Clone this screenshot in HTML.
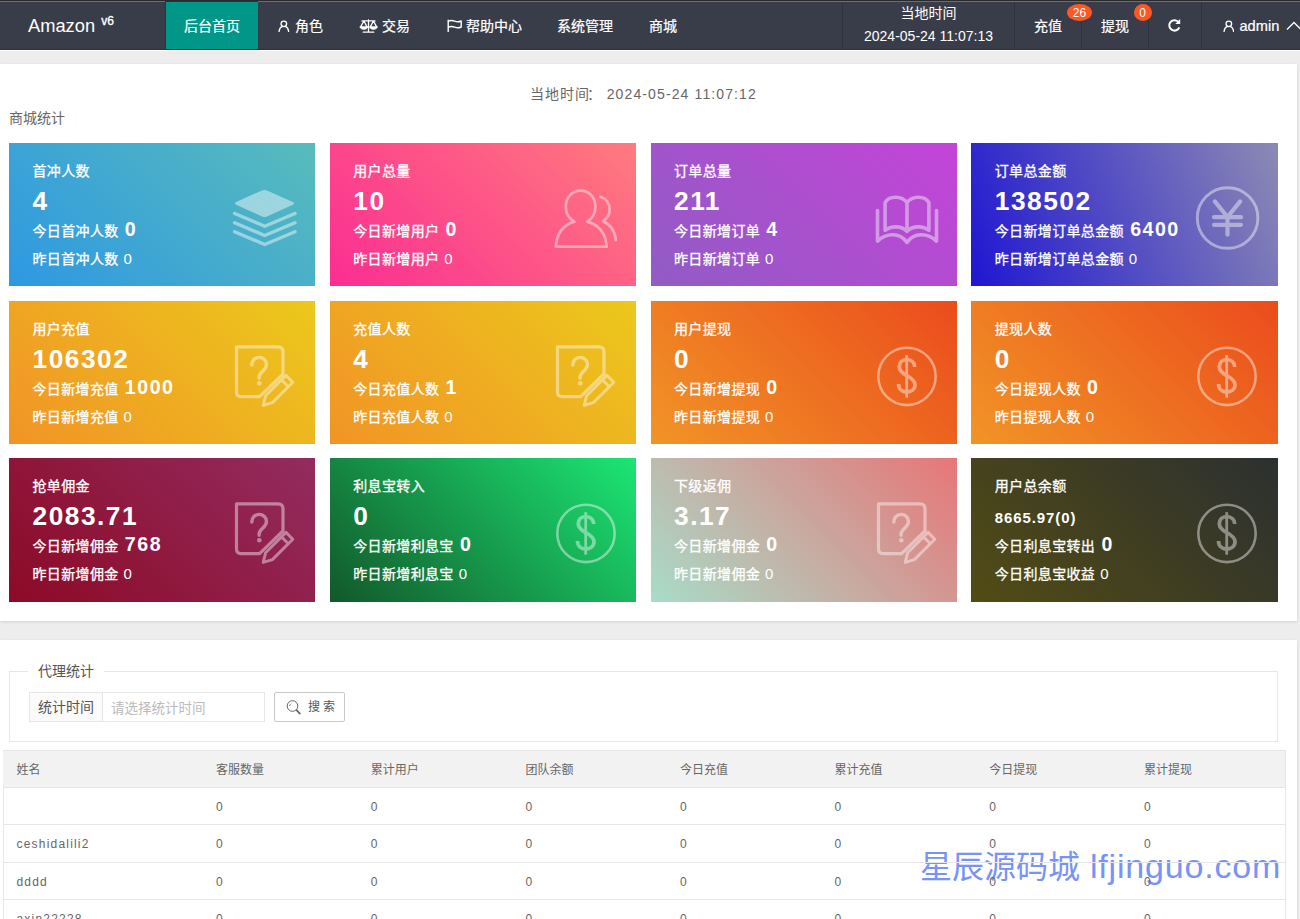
<!DOCTYPE html>
<html lang="zh-CN">
<head>
<meta charset="utf-8">
<title>Amazon v6</title>
<style>
*{box-sizing:border-box;margin:0;padding:0}
html,body{width:1300px;height:919px;overflow:hidden;background:#ededed;font-family:"Liberation Sans","Noto Sans CJK SC",sans-serif;font-size:14px;color:#666}
body{position:relative}
.abs{position:absolute}
/* header */
#hd{position:absolute;left:0;top:0;width:1300px;height:50px;background:#393d49;border-top:2px solid #2a2a2a;border-bottom:1px solid #2e323d;color:#fff}
#hd .nav.on{top:-1px;height:48px;line-height:48px;border-top:1px solid #33302f;border-left:1px solid #3a2c3a;left:165px!important;width:93px!important}
#hd .logo{position:absolute;left:28px;top:12px;font-size:18.3px;line-height:24px;color:#fff;white-space:nowrap}
#hd .logo sup{font-size:12px;font-weight:normal;-webkit-text-stroke:.35px #fff;position:relative;top:0px;left:1px;vertical-align:super;line-height:0}
#hd .nav{position:absolute;top:0;height:47px;line-height:48px;font-size:14px;color:#fff;white-space:nowrap;-webkit-text-stroke:.22px #fff}
#hd .nav.on{background:#009688}
#hd .sep{position:absolute;top:0;width:1px;height:47px;background:#2f333d}
.badge{position:absolute;height:17px;line-height:19px;border-radius:50%;background:#ff5722;color:#fff;font-size:12px;text-align:center}
/* panels */
.panel{position:absolute;background:#fff;box-shadow:0 1px 3px rgba(0,0,0,.12)}
.card{position:absolute;width:306.25px;height:143.2px;color:#fff;overflow:hidden}
.card div{position:absolute;left:23.5px;white-space:nowrap;line-height:20px;font-size:14px;letter-spacing:.35px;-webkit-text-stroke:.3px #fff}
.card .t{top:18px}
.card .n{-webkit-text-stroke:0;top:43px;font-size:26.3px;font-weight:bold;line-height:30px;letter-spacing:1.5px}
.card .n.s{font-size:15px;letter-spacing:.9px;top:44.500px}
.card .a{top:75.5px;line-height:24px}
.card .b{top:106px}
.card .a b{-webkit-text-stroke:0;font-size:19.6px;font-weight:bold;margin-left:2px;letter-spacing:1.5px;line-height:0}
.card .b i{-webkit-text-stroke:0;font-style:normal;font-size:15px;margin-left:.7px;line-height:0}
.card svg{position:absolute}
.fs{border:1px solid #e6e6e6}
.th{font-size:12px;line-height:20px;color:#666;white-space:nowrap}
.td{font-size:12px;line-height:20px;color:#666;letter-spacing:1.2px;white-space:nowrap}
.wm{font-size:32px;line-height:44px;color:#7693f5;white-space:nowrap;letter-spacing:0}
.wm span{font-size:34px;letter-spacing:.82px;margin-left:1px}
</style>
</head>
<body>
<div id="hd">
  <div class="logo">Amazon <sup>v6</sup></div>
  <div class="abs" style="left:0;top:-1px;width:1300px;height:1px;background:#6e6e6e"></div>
  <div class="sep" style="left:842px"></div>
  <div class="sep" style="left:1014px"></div>
  <div class="sep" style="left:1081px"></div>
  <div class="sep" style="left:1148px"></div>
  <div class="sep" style="left:1201px"></div>
  <div class="nav on" style="left:166px;width:92px;text-align:center">后台首页</div>
  <div class="nav" style="left:295px">角色</div>
  <svg class="abs" style="left:278px;top:17.600px" width="11.700" height="12.600" viewBox="0 0 13 14" fill="none" stroke="#fff" stroke-width="1.45" stroke-linecap="round"><circle cx="6.5" cy="4.3" r="3.1"/><path d="M1.2 12.6c.3-3 2.2-4.9 3.7-5.4M11.8 12.6c-.3-3-2.2-4.9-3.7-5.4"/></svg>
  <div class="nav" style="left:382px">交易</div>
  <svg class="abs" style="left:359px;top:16px" width="19" height="16" viewBox="0 0 19 16" fill="none" stroke="#fff" stroke-width="1.300" stroke-linecap="round" stroke-linejoin="round"><path d="M9.500 1.900v12M4.200 14.200h10.600M3 2.900h13M4.850 3L1.500 9.100h6.700zM14.450 3l-3.350 6.100h6.700z"/><path d="M.9 9.100c.5 1.600 2 2.300 3.950 2.300s3.450-.7 3.950-2.300zM10.500 9.100c.5 1.600 2 2.300 3.950 2.300s3.450-.7 3.950-2.300z" fill="#fff" stroke-width=".6"/></svg>
  <div class="nav" style="left:466px">帮助中心</div>
  <svg class="abs" style="left:446px;top:17px" width="16" height="14" viewBox="0 0 16 14" fill="none" stroke="#fff" stroke-width="1.400" stroke-linecap="round" stroke-linejoin="round"><path d="M2.200 1.200v11.200M2.400 2.200c2.100-.9 4.100-.9 6.300 0s4.200.9 6.500-.2v6c-2.300 1.100-4.300 1.100-6.500.2s-4.200-.9-6.300 0"/></svg>
  <div class="nav" style="left:557px">系统管理</div>
  <div class="nav" style="left:649px">商城</div>
  <div class="abs" style="left:843px;top:1px;width:171px;text-align:center;line-height:20px;font-size:14px;color:#fff">当地时间</div>
  <div class="abs" style="left:843px;top:24px;width:171px;text-align:center;line-height:20px;font-size:14px;color:#fff">2024-05-24 11:07:13</div>
  <div class="nav" style="left:1034px">充值</div>
  <div class="badge" style="left:1066.800px;top:2px;width:25.200px">26</div>
  <div class="nav" style="left:1101px">提现</div>
  <div class="badge" style="left:1133.500px;top:2px;width:18.400px">0</div>
  <svg class="abs" style="left:1167px;top:16px" width="15" height="15" viewBox="0 0 15 15" fill="none" stroke="#fff" stroke-width="2" stroke-linecap="butt"><path d="M12.300 9.300A5.200 5.200 0 1 1 11 3.600"/><path d="M13.200 1v5h-5z" fill="#fff" stroke="none"/></svg>
  <svg class="abs" style="left:1222.500px;top:17.600px" width="11.700" height="12.600" viewBox="0 0 13 14" fill="none" stroke="#fff" stroke-width="1.45" stroke-linecap="round"><circle cx="6.5" cy="4.3" r="3.1"/><path d="M1.2 12.600c.3-3 2.200-4.900 3.700-5.400M11.800 12.600c-.3-3-2.200-4.900-3.700-5.400"/></svg>
  <div class="nav" style="left:1239.500px;font-size:14.600px">admin</div>
  <svg class="abs" style="left:1286px;top:19px" width="16" height="10" viewBox="0 0 16 10" fill="none" stroke="#fff" stroke-width="1.3"><path d="M1 8.500l7-7 7 7"/></svg>
</div>
<div class="abs" style="left:0;top:50px;width:1300px;height:1px;background:#fff"></div>
<div class="panel" id="p1" style="left:0;top:64px;width:1297px;height:557px">
  <div class="abs" style="left:530px;top:20px;line-height:20px;letter-spacing:1px;color:#666;white-space:nowrap">当地时间<span style="position:relative;left:-3px">：</span></div><div class="abs" style="left:606.700px;top:20px;line-height:20px;letter-spacing:1.12px;color:#666;white-space:nowrap">2024-05-24 11:07:12</div>
  <div class="abs" style="left:9px;top:44px;line-height:20px;color:#666">商城统计</div>
<!--CARDS-->
<div class="card" style="left:9px;top:79.2px;background:linear-gradient(45deg,#2e98e2,#58bcbc)"><svg width="306" height="143" viewBox="0 0 306 143"><g fill="none" stroke="#fff" opacity=".45" stroke-width="3.4" stroke-linecap="round" stroke-linejoin="round"><path d="M225.6 70.5l30.100 12.700 30.300-12.700M225.600 79.700l30.100 12.800 30.300-12.800M225.600 88.700l30.100 12.800 30.300-12.800"/></g><path d="M227.700 58.700l25.400-11.300q2.400-1 4.800 0l25.400 11.300q3.400 1.700 0 3.400l-25.400 11.300q-2.400 1-4.800 0l-25.400-11.300q-3.400-1.700 0-3.400z" fill="#fff" fill-opacity=".45"/></svg><div class="t">首冲人数</div><div class="n">4</div><div class="a">今日首冲人数 <b>0</b></div><div class="b">昨日首冲人数 <i>0</i></div></div>
<div class="card" style="left:329.75px;top:79.2px;background:linear-gradient(45deg,#fb2d92,#ff7b7e)"><svg width="306" height="143" viewBox="0 0 306 143"><g fill="none" stroke="#fff" opacity=".43" stroke-width="2.700" stroke-linecap="round" stroke-linejoin="round"><path d="M244.400 78.600C239 75.400 235.800 70.200 235.800 64 235.800 54.400 242.300 47.600 250.600 47.600S265.400 54.400 265.400 64C265.400 70.200 262.400 75.400 257.200 78.600 268.800 81.800 275.700 90.600 276.700 103.600H225.800C226.800 90.600 233 81.800 244.400 78.600z"/><path d="M270.300 53.800c5.800 1.800 9.400 6.800 9.400 13 0 4.600-2.400 8.800-6.800 11.400 7.600 3.200 12.100 9.800 12.900 19"/></g></svg><div class="t">用户总量</div><div class="n">10</div><div class="a">今日新增用户 <b>0</b></div><div class="b">昨日新增用户 <i>0</i></div></div>
<div class="card" style="left:650.5px;top:79.2px;background:linear-gradient(45deg,#905cc4,#c444d8)"><svg width="306" height="143" viewBox="0 0 306 143"><g fill="none" stroke="#fff" opacity=".43" stroke-width="3.600" stroke-linecap="round" stroke-linejoin="round"><path d="M226.500 67.500v30.600c4.500-4.400 9.800-6.400 15.300-6.400 5.800 0 10.800 2.600 14.200 7.700 3.400-5.100 8.400-7.700 14.200-7.700 5.500 0 10.800 2 15.300 6.400v-30.600"/><path d="M256 59.600c-2.600-3.600-6.600-5.400-11.300-5.400-4.900 0-8.700 1.900-10.600 5.400v27.800c2.900-2.400 6.500-3.500 10.600-3.500 4.700 0 8.700 1.500 11.300 4.500zM256 59.600c2.600-3.600 6.600-5.400 11.300-5.400 4.900 0 8.700 1.900 10.600 5.400v27.800c-2.900-2.400-6.500-3.500-10.600-3.500-4.700 0-8.700 1.500-11.300 4.500z"/></g></svg><div class="t">订单总量</div><div class="n">211</div><div class="a">今日新增订单 <b>4</b></div><div class="b">昨日新增订单 <i>0</i></div></div>
<div class="card" style="left:971.25px;top:79.2px;background:linear-gradient(68deg,#1f16d2,#8c8ab4)"><svg width="307" height="143" viewBox="0 0 307 143"><g fill="none" stroke="#fff" opacity=".43" stroke-linecap="round" stroke-linejoin="round"><circle cx="256.600" cy="75" r="30.300" stroke-width="2.900"/><path d="M243.800 58.400l12.700 15.600 12.700-15.600M256.500 74v17.600M243 74.200h27M243 81.800h27" stroke-width="4.200"/></g></svg><div class="t">订单总金额</div><div class="n">138502</div><div class="a">今日新增订单总金额 <b>6400</b></div><div class="b">昨日新增订单总金额 <i>0</i></div></div>
<div class="card" style="left:9px;top:237px;background:linear-gradient(45deg,#f19426,#ecc81c)"><svg width="306" height="143" viewBox="0 0 306 143"><g fill="none" stroke="#fff" opacity=".43" stroke-width="3.200" stroke-linecap="round" stroke-linejoin="round"><path d="M250.600 95.600h-18.600q-4.500 0-4.500-4.500v-45.300h41.500q5 0 5 5v22.200z"/><path d="M242.800 64C242.800 59.500 246 56.400 250.100 56.400 254.300 56.400 257.500 59.400 257.500 63.400 257.500 66.600 255.600 68.400 253.600 70.300 251.400 72.400 250.100 73.800 250.100 76V77.300" stroke-width="3.400"/><circle cx="250.300" cy="82.300" r="2.300" fill="#fff" stroke="none"/><path d="M254.200 104.400l2.400-9.600 20.400-20.400 6.800 6.800-20.400 20.400zM272.500 78.900l6.800 6.800" stroke-width="2.900"/></g></svg><div class="t">用户充值</div><div class="n">106302</div><div class="a">今日新增充值 <b>1000</b></div><div class="b">昨日新增充值 <i>0</i></div></div>
<div class="card" style="left:329.75px;top:237px;background:linear-gradient(45deg,#f19426,#ecc81c)"><svg width="306" height="143" viewBox="0 0 306 143"><g fill="none" stroke="#fff" opacity=".43" stroke-width="3.200" stroke-linecap="round" stroke-linejoin="round"><path d="M250.600 95.600h-18.600q-4.500 0-4.500-4.500v-45.300h41.500q5 0 5 5v22.200z"/><path d="M242.800 64C242.800 59.500 246 56.400 250.100 56.400 254.300 56.400 257.500 59.400 257.500 63.400 257.500 66.600 255.600 68.400 253.600 70.300 251.400 72.400 250.100 73.800 250.100 76V77.300" stroke-width="3.400"/><circle cx="250.300" cy="82.300" r="2.300" fill="#fff" stroke="none"/><path d="M254.200 104.400l2.400-9.600 20.400-20.400 6.800 6.800-20.400 20.400zM272.500 78.900l6.800 6.800" stroke-width="2.900"/></g></svg><div class="t">充值人数</div><div class="n">4</div><div class="a">今日充值人数 <b>1</b></div><div class="b">昨日充值人数 <i>0</i></div></div>
<div class="card" style="left:650.5px;top:237px;background:linear-gradient(45deg,#f19426,#eb4c1c)"><svg width="306" height="143" viewBox="0 0 306 143"><g fill="none" stroke="#fff" opacity=".43" stroke-linejoin="round"><circle cx="256" cy="75.400" r="28.700" stroke-width="2.600"/><path d="M255.700 54.200v42.500" stroke-width="2.800"/><path d="M263.700 66c0-4.400-3.500-7.400-8-7.400s-7.400 3-7.400 7.200c0 4.500 3.700 6.800 7.400 8.800 4.300 2.200 8.300 4.700 8.300 9.200s-3.800 7.200-8.300 7.200-8.200-3-8.200-8" stroke-width="3.800"/></g></svg><div class="t">用户提现</div><div class="n">0</div><div class="a">今日新增提现 <b>0</b></div><div class="b">昨日新增提现 <i>0</i></div></div>
<div class="card" style="left:971.25px;top:237px;background:linear-gradient(45deg,#f19426,#eb4c1c)"><svg width="306" height="143" viewBox="0 0 306 143"><g fill="none" stroke="#fff" opacity=".43" stroke-linejoin="round"><circle cx="256" cy="75.400" r="28.700" stroke-width="2.600"/><path d="M255.700 54.200v42.500" stroke-width="2.800"/><path d="M263.700 66c0-4.400-3.500-7.400-8-7.400s-7.400 3-7.400 7.200c0 4.500 3.700 6.800 7.400 8.800 4.300 2.200 8.300 4.700 8.300 9.200s-3.800 7.200-8.300 7.200-8.200-3-8.200-8" stroke-width="3.800"/></g></svg><div class="t">提现人数</div><div class="n">0</div><div class="a">今日提现人数 <b>0</b></div><div class="b">昨日提现人数 <i>0</i></div></div>
<div class="card" style="left:9px;top:394.4px;background:linear-gradient(45deg,#8c0a26,#932c60)"><svg width="306" height="143" viewBox="0 0 306 143"><g fill="none" stroke="#fff" opacity=".43" stroke-width="3.200" stroke-linecap="round" stroke-linejoin="round"><path d="M250.600 95.600h-18.600q-4.500 0-4.500-4.500v-45.300h41.500q5 0 5 5v22.200z"/><path d="M242.800 64C242.800 59.500 246 56.400 250.100 56.400 254.300 56.400 257.500 59.400 257.500 63.400 257.500 66.600 255.600 68.400 253.600 70.300 251.400 72.400 250.100 73.800 250.100 76V77.300" stroke-width="3.400"/><circle cx="250.300" cy="82.300" r="2.300" fill="#fff" stroke="none"/><path d="M254.200 104.400l2.400-9.600 20.400-20.400 6.800 6.800-20.400 20.400zM272.500 78.900l6.800 6.800" stroke-width="2.900"/></g></svg><div class="t">抢单佣金</div><div class="n">2083.71</div><div class="a">今日新增佣金 <b>768</b></div><div class="b">昨日新增佣金 <i>0</i></div></div>
<div class="card" style="left:329.75px;top:394.4px;background:linear-gradient(45deg,#12582a,#1ce674)"><svg width="306" height="143" viewBox="0 0 306 143"><g fill="none" stroke="#fff" opacity=".43" stroke-linejoin="round"><circle cx="256" cy="75.400" r="28.700" stroke-width="2.600"/><path d="M255.700 54.200v42.500" stroke-width="2.800"/><path d="M263.700 66c0-4.400-3.500-7.400-8-7.400s-7.400 3-7.400 7.200c0 4.500 3.700 6.800 7.400 8.800 4.300 2.200 8.300 4.700 8.300 9.200s-3.800 7.200-8.300 7.200-8.200-3-8.200-8" stroke-width="3.800"/></g></svg><div class="t">利息宝转入</div><div class="n">0</div><div class="a">今日新增利息宝 <b>0</b></div><div class="b">昨日新增利息宝 <i>0</i></div></div>
<div class="card" style="left:650.5px;top:394.4px;background:linear-gradient(45deg,#a8dcc8,#e87678)"><svg width="306" height="143" viewBox="0 0 306 143"><g fill="none" stroke="#fff" opacity=".43" stroke-width="3.200" stroke-linecap="round" stroke-linejoin="round"><path d="M250.600 95.600h-18.600q-4.500 0-4.500-4.500v-45.300h41.500q5 0 5 5v22.200z"/><path d="M242.800 64C242.800 59.500 246 56.400 250.100 56.400 254.300 56.400 257.500 59.400 257.500 63.400 257.500 66.600 255.600 68.400 253.600 70.300 251.400 72.400 250.100 73.800 250.100 76V77.300" stroke-width="3.400"/><circle cx="250.300" cy="82.300" r="2.300" fill="#fff" stroke="none"/><path d="M254.200 104.400l2.400-9.600 20.400-20.400 6.800 6.800-20.400 20.400zM272.500 78.900l6.800 6.800" stroke-width="2.900"/></g></svg><div class="t">下级返佣</div><div class="n">3.17</div><div class="a">今日新增佣金 <b>0</b></div><div class="b">昨日新增佣金 <i>0</i></div></div>
<div class="card" style="left:971.25px;top:394.4px;background:linear-gradient(45deg,#524c14,#2c3030)"><svg width="306" height="143" viewBox="0 0 306 143"><g fill="none" stroke="#fff" opacity=".43" stroke-linejoin="round"><circle cx="256" cy="75.400" r="28.700" stroke-width="2.600"/><path d="M255.700 54.200v42.500" stroke-width="2.800"/><path d="M263.700 66c0-4.400-3.500-7.400-8-7.400s-7.400 3-7.400 7.200c0 4.500 3.700 6.800 7.400 8.800 4.300 2.200 8.300 4.700 8.300 9.200s-3.800 7.200-8.300 7.200-8.200-3-8.200-8" stroke-width="3.800"/></g></svg><div class="t">用户总余额</div><div class="n s">8665.97(0)</div><div class="a">今日利息宝转出 <b>0</b></div><div class="b">今日利息宝收益 <i>0</i></div></div>
<!--/CARDS-->
</div>
<div class="panel" id="p2" style="left:0;top:640px;width:1297px;height:290px">
<div class="abs fs" style="left:8.500px;top:31px;width:1269px;height:71px"></div>
<div class="abs" style="left:28px;top:19.5px;width:76px;height:22px;background:#fff;text-align:center;line-height:22px;color:#555;font-size:14px">代理统计</div>
<div class="abs" style="left:29px;top:52px;width:74px;height:30px;background:#fbfbfb;border:1px solid #e6e6e6;text-align:center;line-height:28px;color:#555;font-size:14px">统计时间</div>
<div class="abs" style="left:102px;top:52px;width:163px;height:30px;background:#fff;border:1px solid #e6e6e6;padding-left:8px;line-height:31px;color:#bbb;font-size:13.5px">请选择统计时间</div>
<div class="abs" style="left:274px;top:52px;width:71px;height:30px;background:#fff;border:1px solid #c9c9c9;border-radius:2px;line-height:29px;color:#555;font-size:12px;padding-left:33px;letter-spacing:3px">搜索</div>
<svg class="abs" style="left:285px;top:59px" width="17" height="17" viewBox="0 0 17 17" fill="none" stroke="#666" stroke-width="1"><circle cx="7.500" cy="7" r="5.300"/><path d="M4.700 7a2.800 2.800 0 0 1 1.300-2.300" stroke-width=".9"/><path d="M11.600 11.200l3.200 3.400" stroke-width="1.800" stroke-linecap="round"/></svg>
<div class="abs" style="left:2.500px;top:110px;width:1283px;height:200px;border:1px solid #e6e6e6;border-bottom:0"></div>
<div class="abs" style="left:3px;top:111px;width:1282px;height:36px;background:#f2f2f2"></div>
<div class="abs wm" style="left:920px;top:204px">星辰源码城 <span>lfjinguo.com</span></div>
<div class="abs" style="left:3px;top:147px;width:1282px;height:1px;background:#e6e6e6"></div>
<div class="abs" style="left:3px;top:184px;width:1282px;height:1px;background:#e6e6e6"></div>
<div class="abs" style="left:3px;top:222px;width:1282px;height:1px;background:#e6e6e6"></div>
<div class="abs" style="left:3px;top:259px;width:1282px;height:1px;background:#e6e6e6"></div>
<div class="abs th" style="left:16.5px;top:119.5px">姓名</div>
<div class="abs th" style="left:216.1px;top:119.5px">客服数量</div>
<div class="abs th" style="left:370.7px;top:119.5px">累计用户</div>
<div class="abs th" style="left:525.4px;top:119.5px">团队余额</div>
<div class="abs th" style="left:680.0px;top:119.5px">今日充值</div>
<div class="abs th" style="left:834.6px;top:119.5px">累计充值</div>
<div class="abs th" style="left:989.2px;top:119.5px">今日提现</div>
<div class="abs th" style="left:1143.9px;top:119.5px">累计提现</div>
<div class="abs td" style="left:216.1px;top:157px">0</div>
<div class="abs td" style="left:370.7px;top:157px">0</div>
<div class="abs td" style="left:525.4px;top:157px">0</div>
<div class="abs td" style="left:680.0px;top:157px">0</div>
<div class="abs td" style="left:834.6px;top:157px">0</div>
<div class="abs td" style="left:989.2px;top:157px">0</div>
<div class="abs td" style="left:1143.9px;top:157px">0</div>
<div class="abs td" style="left:16.5px;top:194px">ceshidalili2</div>
<div class="abs td" style="left:216.1px;top:194px">0</div>
<div class="abs td" style="left:370.7px;top:194px">0</div>
<div class="abs td" style="left:525.4px;top:194px">0</div>
<div class="abs td" style="left:680.0px;top:194px">0</div>
<div class="abs td" style="left:834.6px;top:194px">0</div>
<div class="abs td" style="left:989.2px;top:194px">0</div>
<div class="abs td" style="left:1143.9px;top:194px">0</div>
<div class="abs td" style="left:16.5px;top:231.5px">dddd</div>
<div class="abs td" style="left:216.1px;top:231.5px">0</div>
<div class="abs td" style="left:370.7px;top:231.5px">0</div>
<div class="abs td" style="left:525.4px;top:231.5px">0</div>
<div class="abs td" style="left:680.0px;top:231.5px">0</div>
<div class="abs td" style="left:834.6px;top:231.5px">0</div>
<div class="abs td" style="left:989.2px;top:231.5px">0</div>
<div class="abs td" style="left:1143.9px;top:231.5px">0</div>
<div class="abs td" style="left:16.5px;top:268.5px">axin22228</div>
<div class="abs td" style="left:216.1px;top:268.5px">0</div>
<div class="abs td" style="left:370.7px;top:268.5px">0</div>
<div class="abs td" style="left:525.4px;top:268.5px">0</div>
<div class="abs td" style="left:680.0px;top:268.5px">0</div>
<div class="abs td" style="left:834.6px;top:268.5px">0</div>
<div class="abs td" style="left:989.2px;top:268.5px">0</div>
<div class="abs td" style="left:1143.9px;top:268.5px">0</div>
</div>
</body>
</html>
